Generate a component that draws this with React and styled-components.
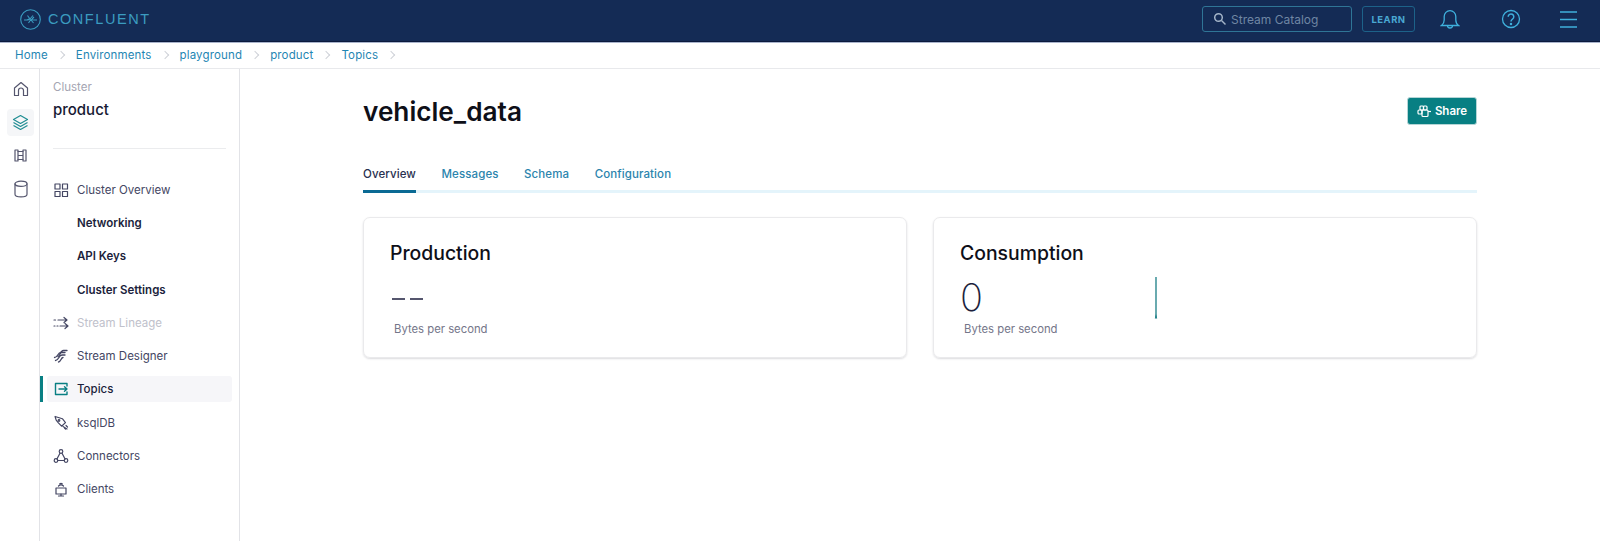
import styled, { createGlobalStyle } from "styled-components";

const GlobalStyle = createGlobalStyle`
  html, body { margin: 0; padding: 0; background: #fff; }
  body { font-family: Inter, "Liberation Sans", sans-serif; overflow: hidden; }
`;

const Page = styled.div`
  width: 1600px;
  height: 541px;
  display: flex;
  flex-direction: column;
  overflow: hidden;
`;

const Header = styled.header`
  height: 41px;
  flex: none;
  background: #142b55;
  border-bottom: 1px solid #0b1a3d;
  box-shadow: 0 1px 0 #a9b4cc;
  display: flex;
  align-items: center;
  padding: 0 23px 0 20px;
`;
const Logo = styled.div`
  display: flex;
  align-items: center;
  gap: 7px;
  color: #3b9cc0;
  font-family: "Liberation Sans", sans-serif;
  font-size: 14.5px;
  letter-spacing: 1.55px;
  margin-top: -3px;
`;
const HeaderRight = styled.div`
  margin-left: auto;
  display: flex;
  align-items: center;
  margin-top: -3px;
`;
const Search = styled.div`
  width: 150px;
  height: 26px;
  box-sizing: border-box;
  border: 1px solid #2f7596;
  border-radius: 3px;
  display: flex;
  align-items: center;
  gap: 4px;
  padding-left: 10px;
  color: #6f86a3;
  font-size: 12px;
`;
const Learn = styled.div`
  width: 53px;
  height: 26px;
  box-sizing: border-box;
  margin-left: 10px;
  border: 1px solid #1d6289;
  border-radius: 3px;
  color: #4aa8d2;
  font-size: 9.5px;
  font-weight: 700;
  letter-spacing: 0.5px;
  display: flex;
  align-items: center;
  justify-content: center;
`;
const HeadIcon = styled.div`
  display: flex;
  margin-left: ${(p) => p.$gap}px;
  color: #3fb0dc;
`;

const Crumbs = styled.nav`
  height: 27px;
  flex: none;
  box-sizing: border-box;
  border-bottom: 1px solid #e8e9ec;
  display: flex;
  align-items: center;
  padding-left: 15px;
  font-size: 11.5px;
  letter-spacing: 0.15px;
  color: #1f86b3;
`;
const Crumb = styled.span`
  display: flex;
  align-items: center;
  &::after {
    content: "";
    width: 5px;
    height: 5px;
    margin: 0 12px 0 10px;
    border-top: 1px solid #cfd2d8;
    border-right: 1px solid #cfd2d8;
    transform: rotate(45deg);
  }
`;

const Body = styled.div`
  flex: 1;
  display: flex;
  min-height: 0;
`;
const Rail = styled.aside`
  width: 40px;
  flex: none;
  box-sizing: border-box;
  border-right: 1px solid #e2e3e7;
  padding: 6px 0 0 7px;
  display: flex;
  flex-direction: column;
  gap: 6.5px;
`;
const RailButton = styled.div`
  width: 27px;
  height: 27px;
  border-radius: 4px;
  display: flex;
  align-items: center;
  justify-content: center;
  color: #55566e;
  background: ${(p) => (p.$active ? "#f5f6f8" : "transparent")};
`;

const Side = styled.aside`
  width: 200px;
  flex: none;
  box-sizing: border-box;
  border-right: 1px solid #e2e3e7;
  position: relative;
`;
const SideHead = styled.div`
  padding: 11px 13px 0 13px;
`;
const SideLabel = styled.div`
  font-size: 11.5px;
  line-height: 14px;
  color: #a4a5b2;
`;
const SideName = styled.div`
  font-size: 15px;
  font-weight: 500;
  line-height: 18px;
  margin-top: 7px;
  color: #171a33;
`;
const Rule = styled.div`
  height: 1px;
  background: #ebecee;
  margin-top: 29px;
  width: 173px;
`;
const NavList = styled.div`
  margin-top: 24px;
  display: flex;
  flex-direction: column;
`;
const NavItem = styled.div`
  height: 33.3px;
  display: flex;
  align-items: center;
  padding-left: 13px;
  position: relative;
  font-size: 11.5px;
  font-weight: ${(p) => (p.$strong ? 600 : 400)};
  color: ${(p) => (p.$muted ? "#c0c1cb" : p.$strong ? "#1c1f3c" : "#444663")};
  &::before {
    content: "";
    display: ${(p) => (p.$active ? "block" : "none")};
    position: absolute;
    left: 7px;
    width: 185px;
    height: 26px;
    top: 3.5px;
    border-radius: 3px;
    background: #f6f6f9;
  }
  &::after {
    content: "";
    display: ${(p) => (p.$active ? "block" : "none")};
    position: absolute;
    left: 0;
    width: 3px;
    height: 26px;
    top: 3.5px;
    background: #087f83;
  }
`;
const NavIcon = styled.span`
  position: relative;
  width: 16px;
  height: 16px;
  margin-right: 8px;
  display: flex;
  color: ${(p) => p.$color || "#444663"};
`;
const NavText = styled.span`
  position: relative;
  ${(p) => p.$active && "color: #1c1f3c; font-weight: 500;"}
`;

const Main = styled.main`
  flex: 1;
  min-width: 0;
  padding: 27px 123px 0 123px;
`;
const TitleRow = styled.div`
  display: flex;
  justify-content: space-between;
  align-items: flex-start;
  height: 57px;
`;
const Title = styled.h1`
  margin: 0;
  font-size: 26.2px;
  font-weight: 600;
  line-height: 32px;
  color: #0e0f18;
`;
const ShareButton = styled.button`
  width: 70px;
  height: 28px;
  margin-top: 1px;
  border: 1px solid #b5d5d6;
  border-radius: 3px;
  background: #087f83;
  color: #fff;
  font: 600 11.5px Inter, sans-serif;
  display: flex;
  align-items: center;
  justify-content: center;
  gap: 4px;
  padding: 0;
`;
const Tabs = styled.div`
  display: flex;
  gap: 25.5px;
  border-bottom: 3px solid #e4f4fb;
  height: 32px;
  box-sizing: content-box;
  margin-top: 5px;
`;
const Tab = styled.div`
  height: 32px;
  box-sizing: content-box;
  display: flex;
  align-items: center;
  font-size: 11.5px;
  letter-spacing: 0.1px;
  font-weight: 500;
  color: ${(p) => (p.$active ? "#28304f" : "#2b84ad")};
  border-bottom: ${(p) => (p.$active ? "3px solid #0a6a94" : "none")};
  margin-bottom: ${(p) => (p.$active ? "-3px" : "0")};
`;
const Cards = styled.div`
  margin-top: 24px;
  display: grid;
  grid-template-columns: 544px 544px;
  column-gap: 26px;
`;
const Card = styled.section`
  height: 141px;
  box-sizing: border-box;
  border: 1px solid #eaeaec;
  border-radius: 7px;
  box-shadow: 0 1px 2px rgba(30, 30, 50, 0.16);
  padding: 23px 26px 0;
  position: relative;
`;
const CardTitle = styled.h2`
  margin: 0;
  font-size: 19.4px;
  font-weight: 500;
  line-height: 24px;
  color: #0e0f18;
`;
const Value = styled.div`
  height: 36px;
  margin-top: 14px;
  font-weight: 200;
  font-size: 38px;
  line-height: 36px;
  color: #1d1f3d;
`;
const Dashes = styled.div`
  display: flex;
  gap: 5px;
  padding: 19px 0 0 2px;
`;
const Dash = styled.span`
  width: 13px;
  height: 1.5px;
  background: #55566e;
`;
const Unit = styled.div`
  margin: 7px 0 0 4px;
  font-size: 11.3px;
  line-height: 14px;
  color: #75768a;
`;
const Spark = styled.svg`
  position: absolute;
  left: 220px;
  top: 59px;
`;

const line = { fill: "none", stroke: "currentColor", strokeWidth: 1.2, strokeLinecap: "round", strokeLinejoin: "round" };

const icons = {
  grid: <g {...line}><rect x="2" y="2" width="5" height="5" /><rect x="9.5" y="2" width="5" height="5" /><rect x="2" y="9.5" width="5" height="5" /><rect x="9.5" y="9.5" width="5" height="5" /></g>,
  lineage: <g {...line}><path d="M5 5h9M11 2.5 14 5l-3 2.5M1 5h1.5" /><path d="M1 11h1M4 11h1M7 11h8M12 8.500l3 2.500-3 2.500" /></g>,
  designer: <g {...line} strokeWidth="1.300"><path d="M5 8.500C7.500 8 7 2.500 10.500 2.500H14" /><path d="M1.500 9.500C5 9.500 4.500 4.500 8 4.500h4" /><path d="M2.500 12.500C6 12.500 5.500 7 9 7h3" /><path d="M5.500 14c2.500 0 2.500-4.500 4.500-4.500" /></g>,
  topics: <g {...line} strokeWidth="1.400"><path d="M14 5V2.500H2.500v11H14V11" /><path d="M6 8h8M11.500 5.800 14 8l-2.500 2.200" /></g>,
  ksql: <g {...line}><path d="M1.500 2 9 3.500 12.500 7 9 11 5.500 8 3 5.500Z" transform="rotate(6 7 7)" /><circle cx="6" cy="5.500" r=".8" /><path d="M10 11.500 14 14M13 10.500l1.500 1.500M11.500 13l1 1" /></g>,
  connectors: <g {...line}><circle cx="8" cy="3.500" r="1.800" /><circle cx="3" cy="12.500" r="1.800" /><circle cx="13" cy="12.500" r="1.800" /><path d="M7 5.200 3.900 11M9 5.200 12.100 11M4.800 12.500h6.400" /></g>,
  clients: <g {...line}><rect x="3" y="7" width="10" height="6" /><path d="M8 13v2M5.500 15h5M5.500 5c1.500-1.300 3.500-1.300 5 0M6.800 2.800c.8-.5 1.600-.5 2.400 0" /></g>,
};

const navItems = [
  { label: "Cluster Overview", icon: "grid" },
  { label: "Networking", strong: true },
  { label: "API Keys", strong: true },
  { label: "Cluster Settings", strong: true },
  { label: "Stream Lineage", icon: "lineage", muted: true },
  { label: "Stream Designer", icon: "designer" },
  { label: "Topics", icon: "topics", active: true },
  { label: "ksqlDB", icon: "ksql" },
  { label: "Connectors", icon: "connectors" },
  { label: "Clients", icon: "clients" },
];

const crumbs = ["Home", "Environments", "playground", "product", "Topics"];
const tabs = ["Overview", "Messages", "Schema", "Configuration"];

function LogoMark() {
  return (
    <svg width="21" height="21" viewBox="0 0 21 21" fill="none" stroke="#3b9cc0">
      <circle cx="10.5" cy="10.5" r="9.800" strokeWidth="1.100" />
      <path d="M4 11h4l2-1 3 1h4M10 10 7.500 6.500M10 10l3-3.500M10.500 11l-2 3M11 11l2.500 3M9 10l-2 1M12 10l2-2" strokeWidth="1.100" />
    </svg>
  );
}

function NavSvg({ name }) {
  return (
    <svg width="16" height="16" viewBox="0 0 16 16">
      {icons[name]}
    </svg>
  );
}

export default function App() {
  return (
    <Page>
      <GlobalStyle />
      <Header>
        <Logo>
          <LogoMark />
          CONFLUENT
        </Logo>
        <HeaderRight>
          <Search>
            <svg width="14" height="14" viewBox="0 0 14 14" fill="none" stroke="#a3b4c8" strokeWidth="1.500">
              <circle cx="5.500" cy="5.500" r="3.800" />
              <path d="m8.500 8.500 4 4" />
            </svg>
            Stream Catalog
          </Search>
          <Learn>LEARN</Learn>
          <HeadIcon $gap={25}>
            <svg width="20" height="21" viewBox="0 0 20 21" fill="none" stroke="currentColor" strokeWidth="1.300">
              <path d="M1.500 16.500c2-1.500 2.700-3 2.700-5.500V7.500a5.800 5.800 0 0 1 11.600 0V11c0 2.500.7 4 2.700 5.500Z" />
              <path d="M7.500 16.500a2.500 2.500 0 0 0 5 0" />
            </svg>
          </HeadIcon>
          <HeadIcon $gap={41}>
            <svg width="20" height="20" viewBox="0 0 20 20" fill="none" stroke="currentColor" strokeWidth="1.300">
              <circle cx="10" cy="10" r="8.500" />
              <path d="M7.200 7.800a2.800 2.800 0 1 1 4.300 2.300c-1 .7-1.500 1.200-1.500 2.400" strokeWidth="1.500" />
              <circle cx="10" cy="15" r=".6" fill="currentColor" />
            </svg>
          </HeadIcon>
          <HeadIcon $gap={39}>
            <svg width="17" height="17" viewBox="0 0 17 17" fill="none" stroke="currentColor" strokeWidth="1.300">
              <path d="M0 1h17M0 8.500h17M0 16h17" />
            </svg>
          </HeadIcon>
        </HeaderRight>
      </Header>
      <Crumbs>
        {crumbs.map((c) => (
          <Crumb key={c}>{c}</Crumb>
        ))}
      </Crumbs>
      <Body>
        <Rail>
          <RailButton>
            <svg width="16" height="16" viewBox="0 0 16 16" {...line}>
              <path d="M1.500 7 8 1.500 14.500 7v7.500h-4V9.500a2.500 2.500 0 0 0-5 0v5h-4Z" />
            </svg>
          </RailButton>
          <RailButton $active>
            <svg width="17" height="17" viewBox="0 0 17 17" fill="none" stroke="#1f8d92" strokeWidth="1.200" strokeLinejoin="round">
              <path d="M8.500 1.500 15.500 5.500 8.500 9.500 1.500 5.500Z" />
              <path d="M1.500 8.500l7 4 7-4M1.500 11.500l7 4 7-4" />
            </svg>
          </RailButton>
          <RailButton>
            <svg width="13" height="13" viewBox="0 0 13 13" {...line}>
              <path d="M1 1h3v1.500h5V1h3v11H9v-1.500H4V12H1Z" />
              <path d="M4 2.500v8M9 2.500v8M4 6.500h5" />
            </svg>
          </RailButton>
          <RailButton>
            <svg width="14" height="18" viewBox="0 0 14 18" {...line}>
              <ellipse cx="7" cy="3.800" rx="6" ry="2.600" />
              <path d="M1 3.800v10.400c0 1.500 2.700 2.600 6 2.600s6-1.100 6-2.600V3.800" />
            </svg>
          </RailButton>
        </Rail>
        <Side>
          <SideHead>
            <SideLabel>Cluster</SideLabel>
            <SideName>product</SideName>
            <Rule />
          </SideHead>
          <NavList>
            {navItems.map((item) => (
              <NavItem key={item.label} $strong={item.strong} $muted={item.muted} $active={item.active}>
                <NavIcon $color={item.active ? "#087f83" : undefined}>
                  {item.icon && <NavSvg name={item.icon} />}
                </NavIcon>
                <NavText $active={item.active}>{item.label}</NavText>
              </NavItem>
            ))}
          </NavList>
        </Side>
        <Main>
          <TitleRow>
            <Title>vehicle_data</Title>
            <ShareButton>
              <svg width="14" height="13" viewBox="0 0 14 13" fill="none" stroke="#fff" strokeWidth="1.200">
                <rect x="3" y="1" width="3.500" height="4" rx="1" />
                <rect x="6.500" y="1" width="3.500" height="4" rx="1" />
                <rect x="1" y="5" width="4" height="4" rx="1" />
                <rect x="5" y="5" width="6" height="6.500" rx="1" />
                <path d="M11 6.500h3" />
              </svg>
              Share
            </ShareButton>
          </TitleRow>
          <Tabs>
            {tabs.map((t, i) => (
              <Tab key={t} $active={i === 0}>{t}</Tab>
            ))}
          </Tabs>
          <Cards>
            <Card>
              <CardTitle>Production</CardTitle>
              <Value>
                <Dashes>
                  <Dash />
                  <Dash />
                </Dashes>
              </Value>
              <Unit>Bytes per second</Unit>
            </Card>
            <Card>
              <CardTitle>Consumption</CardTitle>
              <Value>0</Value>
              <Unit>Bytes per second</Unit>
              <Spark width="4" height="42" viewBox="0 0 4 42">
                <path d="M2 0v40" stroke="#1a7d85" strokeWidth="1.300" />
                <path d="M.8 41.500 2 37l1.200 4.500Z" fill="#1a7d85" />
              </Spark>
            </Card>
          </Cards>
        </Main>
      </Body>
    </Page>
  );
}
